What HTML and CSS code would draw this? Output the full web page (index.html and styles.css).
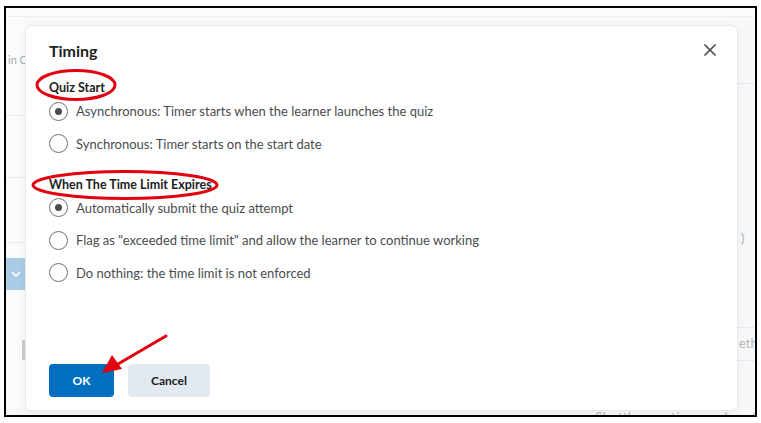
FILE: index.html
```html
<!DOCTYPE html>
<html lang="en">
<head>
    <meta charset="UTF-8">
    <title>Timing</title>
    <link rel="stylesheet" href="styles.css">
</head>
<body>
    <div class="frame">
        <!-- page behind the dialog -->
        <div class="page">
            <div class="topbar"></div>
            <div class="page-body">
                <div class="left-rail">
                    <div class="rail-text">in C</div>
                    <div class="rail-line first"></div>
                    <div class="rail-line second"></div>
                    <div class="rail-line third"></div>
                    <div class="rail-toggle">
                        <svg width="10" height="6" viewBox="0 0 10 6"><path d="M1 1l4 4 4-4" fill="none" stroke="#fff" stroke-width="1.6"/></svg>
                    </div>
                    <div class="rail-grip"></div>
                </div>
                <div class="page-gap"></div>
                <div class="right-rail">
                    <div class="rail-line head"></div>
                    <div class="rail-paren">)</div>
                    <div class="rail-line lower"></div>
                    <div class="rail-eth">eth</div>
                    <div class="rail-line last"></div>
                </div>
            </div>
            <div class="page-foot">Shuttle questions and sectio</div>
        </div>

        <div class="dialog">
            <div class="dialog-head">
                <h1>Timing</h1>
                <button class="close" aria-label="Close">
                    <svg width="12" height="12" viewBox="0 0 12 12"><path d="M1 1l10 10M11 1L1 11" stroke="#494c4e" stroke-width="1.7" stroke-linecap="round"/></svg>
                </button>
            </div>

            <div class="group">
                <div class="group-label">Quiz Start</div>
                <label class="radio"><span class="dot checked"></span>Asynchronous: Timer starts when the learner launches the quiz</label>
                <label class="radio"><span class="dot"></span>Synchronous: Timer starts on the start date</label>
            </div>

            <div class="group">
                <div class="group-label">When The Time Limit Expires</div>
                <label class="radio"><span class="dot checked"></span>Automatically submit the quiz attempt</label>
                <label class="radio"><span class="dot"></span>Flag as "exceeded time limit" and allow the learner to continue working</label>
                <label class="radio"><span class="dot"></span>Do nothing: the time limit is not enforced</label>
            </div>

            <div class="dialog-foot">
                <button class="btn primary">OK</button>
                <button class="btn">Cancel</button>
            </div>
        </div>

        <!-- red annotations -->
        <svg class="marks" width="753" height="411" viewBox="0 0 753 411">
            <ellipse cx="70" cy="77" rx="39" ry="14.5" fill="none" stroke="#e3000f" stroke-width="3"/>
            <ellipse cx="119" cy="177" rx="92" ry="13.5" fill="none" stroke="#e3000f" stroke-width="3"/>
            <path d="M160 328L112 356" stroke="#e3000f" stroke-width="3" stroke-linecap="round"/>
            <polygon points="96,365 106,347 116,361" fill="#e3000f"/>
        </svg>
    </div>
</body>
</html>
```

FILE: styles.css
```css
body {
    margin: 0;
    font-family: Lato, "Noto Sans", sans-serif;
    background-color: #fff;
}
.frame {
    position: relative;
    width: 749px;
    height: 407px;
    margin: 6px 0 0 4px;
    border: 2px solid #000;
    overflow: hidden;
}
.page {
    height: 100%;
    background-color: #f7f8fa;
    display: flex;
    flex-direction: column;
}
.topbar {
    height: 8px;
    background-color: #fcfcfd;
    border-bottom: 1px solid #eef0f3;
}
.page-body {
    flex: 1;
    display: flex;
}
.left-rail {
    width: 19px;
    background-color: #fafbfc;
}
.rail-text {
    margin-top: 36px;
    height: 14px;
    padding-left: 2px;
    font-size: 11px;
    line-height: 14px;
    color: #a8abae;
    white-space: nowrap;
    overflow: hidden;
}
.rail-line {
    border-top: 1px solid #e8eaed;
}
.rail-line.first {
    margin-top: 48px;
}
.rail-line.second {
    margin-top: 61px;
}
.rail-line.third {
    margin-top: 64px;
}
.rail-toggle {
    margin-top: 15px;
    height: 32px;
    background-color: #a8cbe6;
    display: flex;
    align-items: center;
    justify-content: center;
}
.rail-grip {
    width: 3px;
    height: 20px;
    margin: 50px 0 0 16px;
    background-color: #c9cbce;
}
.page-gap {
    flex: 1;
}
.right-rail {
    width: 17px;
    font-size: 13px;
    line-height: 16px;
    color: #b3b6b9;
    white-space: nowrap;
}
.rail-line.head {
    margin-top: 66px;
}
.rail-paren {
    margin-top: 146px;
    padding-left: 3px;
}
.rail-line.lower {
    margin-top: 81px;
}
.rail-eth {
    margin-top: 7px;
    padding-left: 1px;
}
.rail-line.last {
    margin-top: 9px;
}
.page-foot {
    height: 7px;
    padding-left: 589px;
    font-size: 14px;
    line-height: 18px;
    color: #b3b6b9;
    white-space: nowrap;
    overflow: hidden;
}

.dialog {
    position: absolute;
    left: 19px;
    top: 17px;
    width: 713px;
    height: 386px;
    box-sizing: border-box;
    padding: 0 22px 0 23px;
    background-color: #fff;
    border: 1px solid #e6e9ee;
    border-radius: 7px;
    box-shadow: 0 2px 10px rgba(0,0,0,0.05);
    color: #202122;
    display: flex;
    flex-direction: column;
}
.dialog-head {
    display: flex;
    justify-content: space-between;
    align-items: center;
    height: 48px;
}
.dialog-head h1 {
    margin: 0;
    font-size: 16px;
    font-weight: 700;
}
.close {
    border: none;
    background: none;
    padding: 0;
    margin-right: -1px;
    display: flex;
}
.group {
    margin-top: 5px;
}
.group + .group {
    margin-top: 22px;
}
.group-label {
    font-size: 12.5px;
    font-weight: 700;
    line-height: 18px;
}
.radio {
    display: flex;
    align-items: center;
    height: 20px;
    margin-top: 12.5px;
    font-size: 13px;
    color: #494c4e;
}
.group-label + .radio {
    margin-top: 4px;
}
.dot {
    width: 19px;
    height: 19px;
    box-sizing: border-box;
    border: 1px solid #6e7376;
    border-radius: 50%;
    margin-right: 8px;
    display: flex;
    align-items: center;
    justify-content: center;
}
.dot.checked::after {
    content: "";
    width: 7px;
    height: 7px;
    border-radius: 50%;
    background-color: #494c4e;
}
.dialog-foot {
    margin-top: auto;
    margin-bottom: 13px;
    display: flex;
    gap: 14px;
}
.btn {
    height: 33px;
    padding: 0 23px;
    border: none;
    border-radius: 4px;
    font-family: Lato, "Noto Sans", sans-serif;
    font-size: 12px;
    font-weight: 700;
    color: #202122;
    background-color: #e3e9f1;
}
.btn.primary {
    width: 65px;
    padding: 0;
    color: #fff;
    background-color: #006fbf;
}
.marks {
    position: absolute;
    left: 0;
    top: 0;
}
```
